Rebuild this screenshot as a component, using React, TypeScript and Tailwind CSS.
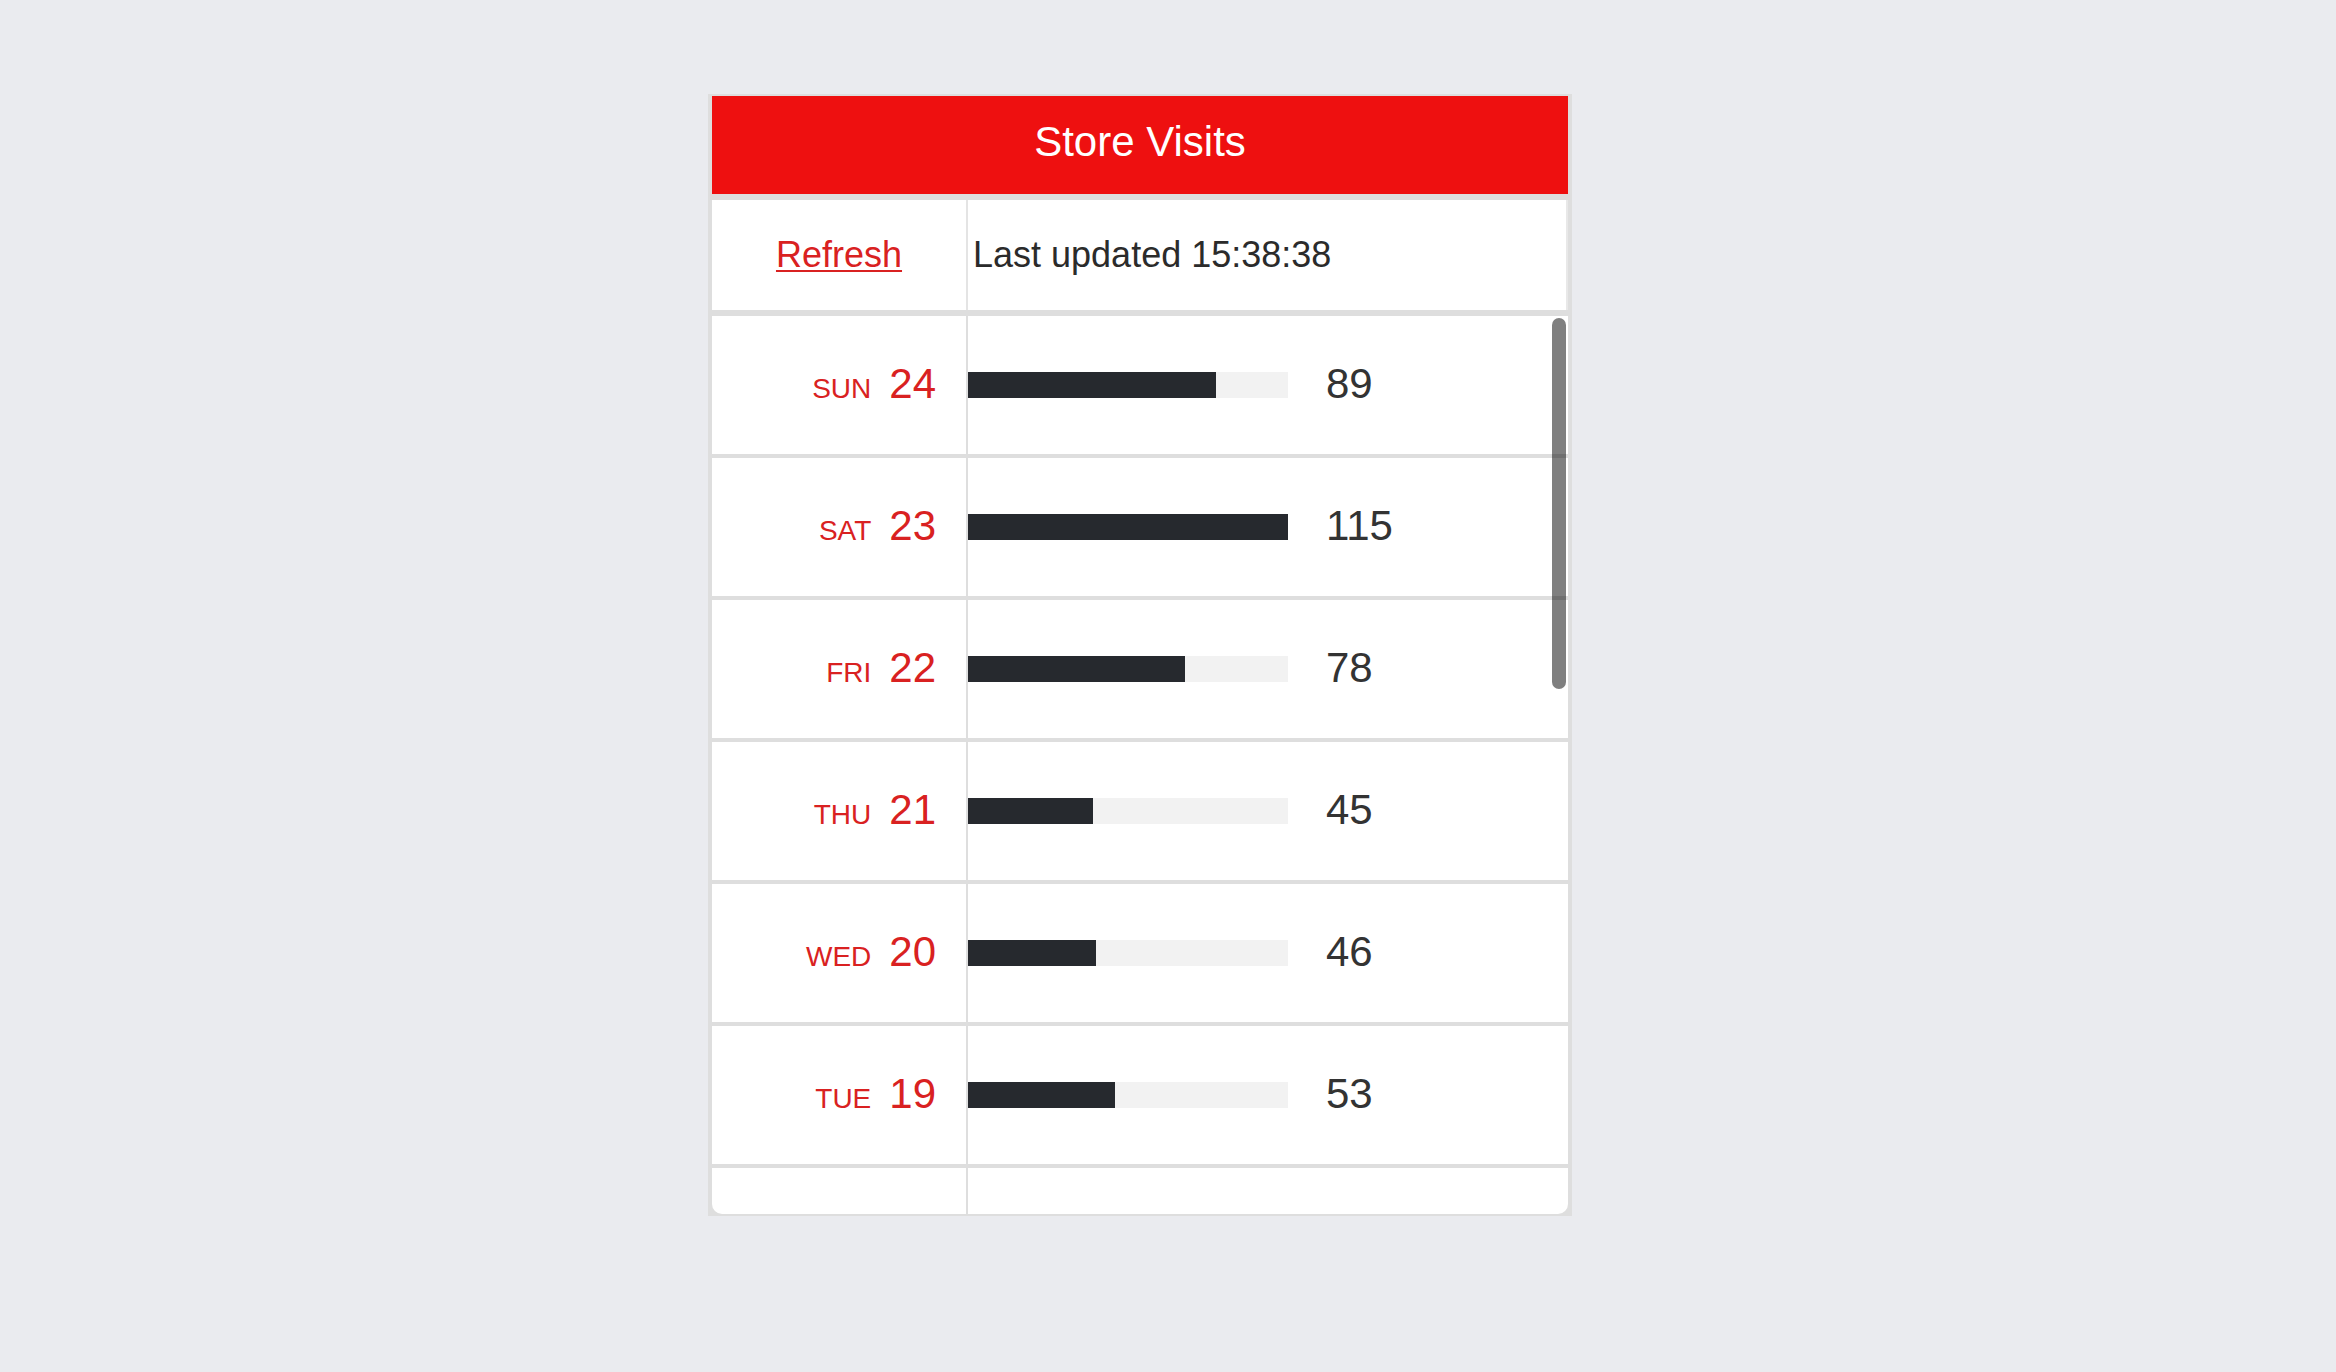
import React from "react";

const rows: { day: string; date: number; value: number }[] = [
  { day: "SUN", date: 24, value: 89 },
  { day: "SAT", date: 23, value: 115 },
  { day: "FRI", date: 22, value: 78 },
  { day: "THU", date: 21, value: 45 },
  { day: "WED", date: 20, value: 46 },
  { day: "TUE", date: 19, value: 53 },
];

const MAX = 115;
const TRACK = 320;

export default function App() {
  return (
    <div
      className="min-h-screen bg-[#eaebef] flex justify-center pt-[94px] pr-[56px]"
      style={{ fontFamily: '"Liberation Sans", Arial, Helvetica, sans-serif' }}
    >
      <div className="w-[864px] h-[1122px] bg-[#dedede] pt-[2px] px-[4px] pb-[2px] flex flex-col">
        <div className="h-[98px] bg-[#ee1010] flex items-center justify-center pb-[8px]">
          <span className="text-[42px] text-white">Store Visits</span>
        </div>

        <div className="mt-[6px] h-[110px] flex gap-[2px] bg-[#e4e4e4]">
          <div className="w-[254px] bg-white flex items-center justify-center">
            <a className="text-[36px] text-[#d92121] underline underline-offset-[3px] decoration-2 cursor-pointer">
              Refresh
            </a>
          </div>
          <div className="flex-1 bg-white flex items-center pl-[5px] border-r-2 border-[#e8e8e8]">
            <span className="text-[36px] text-[#2b2b2b]">Last updated 15:38:38</span>
          </div>
        </div>

        <div className="mt-[6px] flex-1 relative overflow-hidden rounded-b-[10px]">
          <div className="flex flex-col gap-[4px]">
            {rows.map((r, i) => (
              <div key={i} className="h-[138px] flex gap-[2px] shrink-0">
                <div className="w-[254px] bg-white flex items-center justify-end pr-[30px] pb-[4px]">
                  <div className="flex items-baseline text-[#d92121]">
                    <span className="text-[28px]">{r.day}</span>
                    <span className="text-[42px] ml-[18px]">{r.date}</span>
                  </div>
                </div>
                <div className="flex-1 bg-white flex items-center">
                  <div className="w-[320px] h-[26px] bg-[#f2f2f2]">
                    <div
                      className="h-full bg-[#26292e]"
                      style={{ width: `${(r.value / MAX) * TRACK}px` }}
                    />
                  </div>
                  <span className="ml-[38px] text-[42px] text-[#333333] -translate-y-[2px]">
                    {r.value}
                  </span>
                </div>
              </div>
            ))}
            <div className="h-[138px] flex gap-[2px] shrink-0">
              <div className="w-[254px] bg-white" />
              <div className="flex-1 bg-white" />
            </div>
          </div>
          <div className="absolute top-[2px] right-[2px] w-[14px] h-[371px] rounded-full bg-black/50" />
        </div>
      </div>
    </div>
  );
}
